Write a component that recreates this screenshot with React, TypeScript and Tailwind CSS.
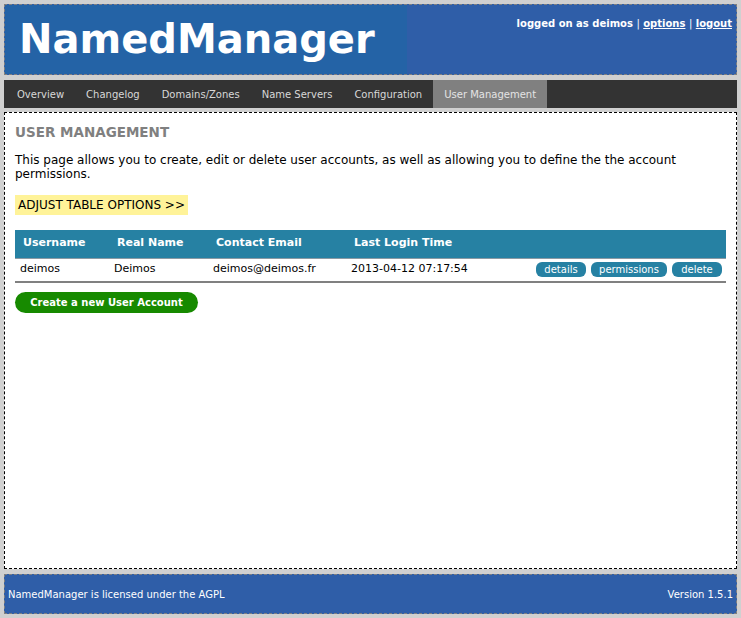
const font = { fontFamily: '"DejaVu Sans", Verdana, sans-serif' };

const users = [
  { username: "deimos", realname: "Deimos", email: "deimos@deimos.fr", lastLogin: "2013-04-12 07:17:54" },
];

const navItems = ["Overview", "Changelog", "Domains/Zones", "Name Servers", "Configuration", "User Management"];

const actions = [
  { label: "details", w: "w-[50px]" },
  { label: "permissions", w: "w-[76px]" },
  { label: "delete", w: "w-[50px]" },
];

export default function App() {
  return (
    <div className="min-h-screen bg-[#d0d0d0] p-[4px] text-black" style={font}>
      {/* header */}
      <div className="flex h-[71px] border border-dashed border-[#808080] bg-[#2f5ea8]">
        <div className="w-[402px] bg-[#2463a6] pl-[14px] pt-[14px]">
          <div className="text-[40px] font-bold leading-none text-white">NamedManager</div>
        </div>
        <div className="flex-1 pr-[4px] pt-[14px] text-right text-[10px] font-bold leading-none text-white">
          logged on as deimos <span className="font-normal">|</span>{" "}
          <a href="#" className="underline">options</a> <span className="font-normal">|</span>{" "}
          <a href="#" className="underline">logout</a>
        </div>
      </div>

      {/* menu */}
      <div className="mt-[5px] flex h-[28px] bg-[#333333] pl-[2px]">
        {navItems.map((item) => (
          <div
            key={item}
            className={`flex items-center px-[11px] text-[10px] ${
              item === "User Management" ? "bg-[#808080] text-[#e4e4e4]" : "text-[#d8d8d8]"
            }`}
          >
            {item}
          </div>
        ))}
      </div>

      {/* content */}
      <div className="mt-[4px] h-[457px] border border-dashed border-black bg-white px-[10px]">
        <h3 className="mt-[13px] text-[13.5px] font-bold leading-none text-[#808080]">USER MANAGEMENT</h3>
        <p className="mt-[13px] text-[12px] leading-[14px]">
          This page allows you to create, edit or delete user accounts, as well as allowing you to define the the
          account permissions.
        </p>
        <div className="mt-[14px] w-fit bg-[#fff399] px-[3px] text-[12px] leading-[20px]">
          ADJUST TABLE OPTIONS &gt;&gt;
        </div>

        <div className="mt-[15px]">
          <div className="flex h-[29px] items-center border-b border-[#8a9aa4] bg-[#2681a3] text-[11px] font-bold text-white">
            <div className="w-[94px] pl-[8px]">Username</div>
            <div className="w-[99px] pl-[8px]">Real Name</div>
            <div className="w-[138px] pl-[8px]">Contact Email</div>
            <div className="flex-1 pl-[8px]">Last Login Time</div>
          </div>
          {users.map((u) => (
            <div key={u.username} className="flex h-[24px] items-center border-b-2 border-[#808080] text-[11px]">
              <div className="w-[94px] pl-[5px]">{u.username}</div>
              <div className="w-[99px] pl-[5px]">{u.realname}</div>
              <div className="w-[138px] pl-[5px]">{u.email}</div>
              <div className="flex-1 pl-[5px]">{u.lastLogin}</div>
              <div className="flex gap-[5px] pr-[4px]">
                {actions.map((b) => (
                  <span
                    key={b.label}
                    className={`flex h-[15px] items-center justify-center rounded-[6px] bg-[#2681a3] text-[10px] text-white ${b.w}`}
                  >
                    {b.label}
                  </span>
                ))}
              </div>
            </div>
          ))}
        </div>

        <button className="mt-[9px] flex h-[21px] w-[183px] items-center justify-center rounded-full bg-[#178a00] text-[10px] font-bold text-white">
          Create a new User Account
        </button>
      </div>

      {/* footer */}
      <div className="mt-[5px] flex h-[40px] items-center justify-between border border-dashed border-[#808080] bg-[#2f5ea8] px-[3px] text-[10px] text-white">
        <span>NamedManager is licensed under the AGPL</span>
        <span>Version 1.5.1</span>
      </div>
    </div>
  );
}
